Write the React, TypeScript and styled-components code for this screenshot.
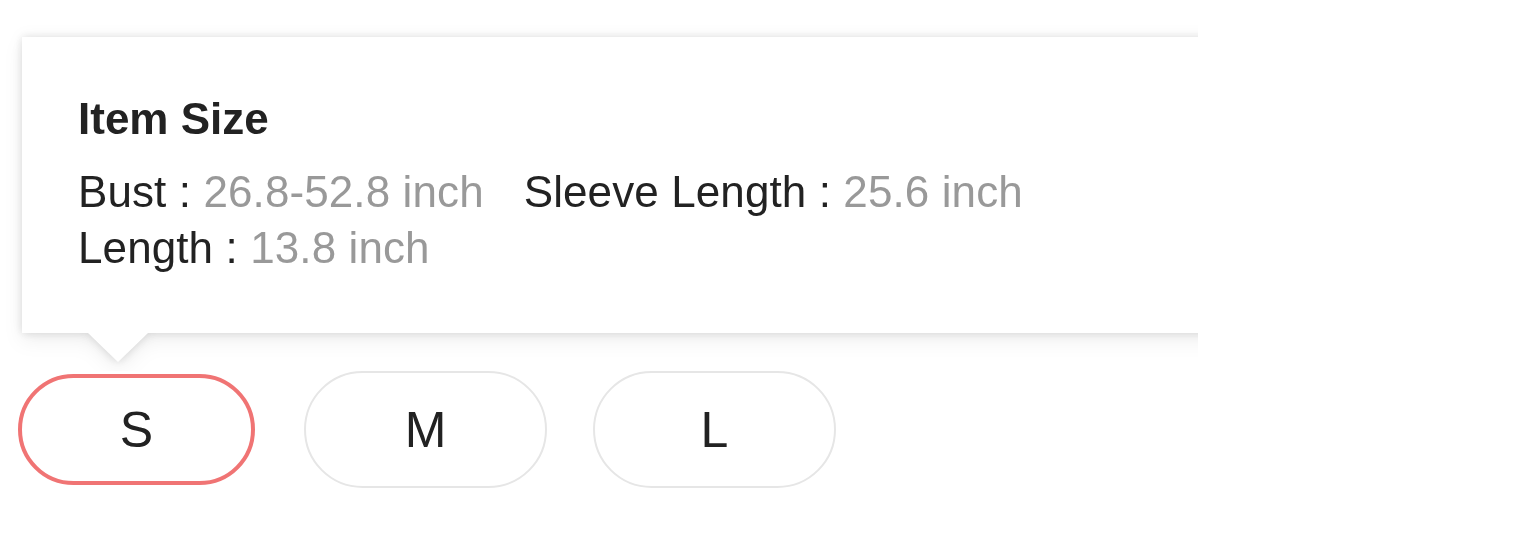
import React from "react";
import styled, { createGlobalStyle } from "styled-components";

const GlobalStyle = createGlobalStyle`
  html, body {
    margin: 0;
    padding: 0;
    background: #ffffff;
  }
  body {
    font-family: "Liberation Sans", Arial, Helvetica, sans-serif;
    color: #222222;
  }
`;

const Page = styled.div`
  display: flex;
  flex-direction: column;
  width: 1536px;
  height: 548px;
  box-sizing: border-box;
  overflow: hidden;
`;

const Clip = styled.div`
  width: 1198px;
  box-sizing: border-box;
  overflow: hidden;
  padding: 37px 0 38px 22px;
  margin-bottom: -38px;
`;

const Popup = styled.div`
  position: relative;
  width: 1400px;
  height: 296px;
  box-sizing: border-box;
  padding: 54px 56px 0 56px;
  background: #ffffff;
  filter: drop-shadow(0 0 4px rgba(0, 0, 0, 0.09)) drop-shadow(0 0 7px rgba(0, 0, 0, 0.06))
    drop-shadow(0 8px 9px rgba(0, 0, 0, 0.06));

  &::after {
    content: "";
    position: absolute;
    left: 66px;
    top: 100%;
    width: 0;
    height: 0;
    border-left: 30px solid transparent;
    border-right: 30px solid transparent;
    border-top: 29px solid #ffffff;
  }
`;

const Title = styled.div`
  font-size: 44px;
  line-height: 56px;
  font-weight: 700;
  color: #222222;
`;

const Specs = styled.div`
  display: flex;
  flex-wrap: wrap;
  column-gap: 40px;
  max-width: 1060px;
  margin-top: 17px;
`;

const Spec = styled.div`
  font-size: 44px;
  line-height: 56px;
  letter-spacing: 0.1px;
  white-space: nowrap;
  color: #222222;
`;

const Value = styled.span`
  color: #999999;
`;

const Sizes = styled.div`
  display: flex;
  align-items: center;
  gap: 46px;
  padding: 38px 0 0 15px;
`;

const SizeButton = styled.button<{ $active?: boolean }>`
  display: flex;
  align-items: center;
  justify-content: center;
  box-sizing: border-box;
  width: ${(p) => (p.$active ? "237px" : "243px")};
  height: ${(p) => (p.$active ? "111px" : "117px")};
  margin: 0 ${(p) => (p.$active ? "3px" : "0")};
  border-radius: 60px;
  border: ${(p) => (p.$active ? "4px solid #f07474" : "2px solid #e6e6e6")};
  background: #ffffff;
  font-family: "Liberation Sans", Arial, Helvetica, sans-serif;
  font-size: 50px;
  color: #222222;
  padding: 0;
  cursor: pointer;
`;

const specs = [
  { label: "Bust", value: "26.8-52.8 inch" },
  { label: "Sleeve Length", value: "25.6 inch" },
  { label: "Length", value: "13.8 inch" },
];

export default function App() {
  return (
    <>
      <GlobalStyle />
      <Page>
        <Clip>
          <Popup>
            <Title>Item Size</Title>
            <Specs>
              {specs.map((s) => (
                <Spec key={s.label}>
                  {s.label} : <Value>{s.value}</Value>
                </Spec>
              ))}
            </Specs>
          </Popup>
        </Clip>
        <Sizes>
          <SizeButton $active>S</SizeButton>
          <SizeButton>M</SizeButton>
          <SizeButton>L</SizeButton>
        </Sizes>
      </Page>
    </>
  );
}
